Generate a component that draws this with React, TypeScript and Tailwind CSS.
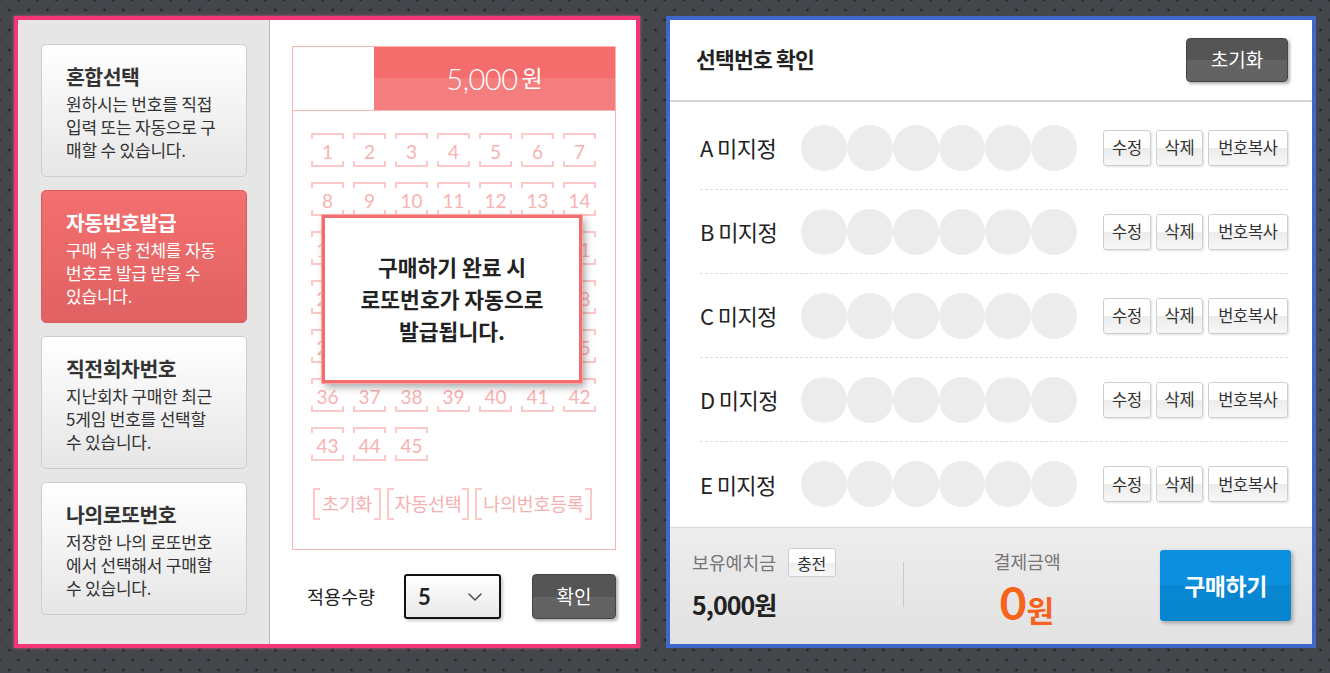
import { ChevronDown } from 'lucide-react';

const menus = [
  { title: '혼합선택', desc: ['원하시는 번호를 직접', '입력 또는 자동으로 구', '매할 수 있습니다.'], active: false },
  { title: '자동번호발급', desc: ['구매 수량 전체를 자동', '번호로 발급 받을 수', '있습니다.'], active: true },
  { title: '직전회차번호', desc: ['지난회차 구매한 최근', '5게임 번호를 선택할', '수 있습니다.'], active: false },
  { title: '나의로또번호', desc: ['저장한 나의 로또번호', '에서 선택해서 구매할', '수 있습니다.'], active: false },
];

const slots = ['A', 'B', 'C', 'D', 'E'];
const numbers = Array.from({ length: 45 }, (_, i) => i + 1);

function NumBox({ n }: { n: number }) {
  return (
    <div className="relative w-[33px] h-[34px] border-y-2 border-[#fcc9c9] flex items-center justify-center text-[19px] leading-none text-[#f8b2b2] font-['Lato',sans-serif]">
      <span className="absolute left-0 top-0 w-[2px] h-[4px] bg-[#fcc9c9]" />
      <span className="absolute right-0 top-0 w-[2px] h-[4px] bg-[#fcc9c9]" />
      <span className="absolute left-0 bottom-0 w-[2px] h-[4px] bg-[#fcc9c9]" />
      <span className="absolute right-0 bottom-0 w-[2px] h-[4px] bg-[#fcc9c9]" />
      <span className="pt-[2px]">{n}</span>
    </div>
  );
}

function Bracket({ label, width }: { label: string; width: string }) {
  return (
    <div className={`relative h-[32px] ${width} border-x-2 border-[#fcc9c9] flex items-center justify-center text-[18.5px] text-[#f7b0b0] tracking-[-0.3px]`}>
      <span className="absolute left-0 top-0 w-[5px] h-[2px] bg-[#fcc9c9]" />
      <span className="absolute right-0 top-0 w-[5px] h-[2px] bg-[#fcc9c9]" />
      <span className="absolute left-0 bottom-0 w-[5px] h-[2px] bg-[#fcc9c9]" />
      <span className="absolute right-0 bottom-0 w-[5px] h-[2px] bg-[#fcc9c9]" />
      {label}
    </div>
  );
}

function SmallBtn({ label, width }: { label: string; width: string }) {
  return (
    <button className={`h-[36px] ${width} rounded-[3px] border border-[#cfcfcf] bg-[linear-gradient(#ffffff_0%,#ffffff_50%,#ececec_51%,#f7f7f7_100%)] shadow-[1px_1px_2px_rgba(0,0,0,0.12)] text-[16.5px] text-[#333] tracking-[-0.3px]`}>
      {label}
    </button>
  );
}

export default function App() {
  return (
    <div className="w-[1330px] h-[673px] overflow-hidden bg-[#43474b] bg-[radial-gradient(circle,#2b2e31_1.3px,transparent_1.8px),radial-gradient(circle,#2b2e31_1.3px,transparent_1.8px)] bg-[length:19px_20px] bg-[position:0_0,9px_10px] font-['Noto_Sans_CJK_KR',sans-serif] flex items-start gap-[26px] pl-[14px] pt-[16px]">
      {/* Left: 번호 선택 */}
      <div className="w-[626px] h-[632px] border-4 border-[#f7367a] bg-white flex shadow-[0_0_3px_rgba(255,120,160,0.6)]">
        <div className="w-[252px] h-full bg-[#e6e6e6] border-r border-[#b9b9b9] pl-[23px] pt-[24px] flex flex-col gap-[13px]">
          {menus.map((m) => (
            <div
              key={m.title}
              className={`w-[206px] h-[133px] rounded-[5px] border pl-[24px] pt-[16px] ${
                m.active
                  ? 'border-[#d95b5b] bg-[linear-gradient(#f46f6f,#e06262)] text-white'
                  : 'border-[#cdcdcd] bg-[linear-gradient(#ffffff,#e6e6e6)] text-[#333]'
              }`}
            >
              <div className="text-[20.5px] font-bold leading-[30px] tracking-[-0.5px]">{m.title}</div>
              <div className="text-[17px] leading-[23px] mt-[1px] tracking-[-0.2px]">
                {m.desc.map((d) => (
                  <div key={d}>{d}</div>
                ))}
              </div>
            </div>
          ))}
        </div>

        <div className="flex-1 pl-[22px] pt-[26px]">
          <div className="relative w-[324px] h-[504px] border border-[#f7b6b6] flex flex-col">
            <div className="flex h-[64px] border-b border-[#f7b6b6]">
              <div className="w-[81px]" />
              <div className="flex-1 bg-[linear-gradient(#f46c6c_0%,#f46c6c_50%,#f47e7e_50%,#f47d7d_100%)] flex items-center justify-center text-white">
                <span className="font-['Lato',sans-serif] text-[29px] font-light tracking-[-0.5px]">5,000</span>
                <span className="text-[23px] ml-[4px] mb-[2px]">원</span>
              </div>
            </div>

            <div className="pl-[18px] pt-[22px] grid grid-cols-[repeat(7,33px)] gap-x-[9px] gap-y-[15px]">
              {numbers.map((n) => (
                <NumBox key={n} n={n} />
              ))}
            </div>

            <div className="flex gap-[6px] pl-[20px] mt-[27px]">
              <Bracket label="초기화" width="w-[68px]" />
              <Bracket label="자동선택" width="w-[82px]" />
              <Bracket label="나의번호등록" width="w-[117px]" />
            </div>

            {/* 자동발급 안내 */}
            <div className="absolute left-[29px] top-[168px] w-[260px] h-[168px] bg-white border-[3px] border-[#f26e6e] ring-1 ring-[#f9a9a9] shadow-[3px_4px_8px_rgba(0,0,0,0.35)] flex items-center justify-center text-center text-[21.5px] font-bold leading-[32px] text-[#222]">
              <div>
                구매하기 완료 시<br />
                로또번호가 자동으로<br />
                발급됩니다.
              </div>
            </div>
          </div>

          <div className="flex items-center mt-[24px]">
            <div className="w-[112px] pl-[15px] text-[18.5px] text-[#222]">적용수량</div>
            <div className="w-[97px] h-[45px] rounded-[3px] border-2 border-[#111] bg-[linear-gradient(#ffffff,#e8e8e8)] shadow-[2px_2px_3px_rgba(0,0,0,0.2)] flex items-center justify-between pl-[12px] pr-[12px]">
              <span className="text-[22px] font-bold text-[#222] font-['Lato',sans-serif]">5</span>
              <ChevronDown className="w-[24px] h-[24px] text-[#555]" strokeWidth={1.6} />
            </div>
            <button className="ml-[31px] w-[84px] h-[45px] rounded-[4px] bg-[linear-gradient(#555555_0%,#555555_50%,#636363_50%,#626262_100%)] border border-[#444] shadow-[2px_2px_3px_rgba(0,0,0,0.3)] text-white text-[19px]">
              확인
            </button>
          </div>
        </div>
      </div>

      {/* Right: 선택번호 확인 */}
      <div className="w-[650px] h-[632px] border-4 border-[#3f66c9] bg-white flex flex-col">
        <div className="h-[82px] border-b-2 border-[#d4d4d4] flex items-center justify-between pl-[26px] pr-[24px] pb-[1px]">
          <div className="text-[21.5px] font-bold text-[#222] tracking-[-0.8px]">선택번호 확인</div>
          <button className="w-[102px] h-[44px] rounded-[4px] bg-[linear-gradient(#555555_0%,#555555_50%,#636363_50%,#626262_100%)] border border-[#444] shadow-[2px_2px_3px_rgba(0,0,0,0.3)] text-white text-[19px]">
            초기화
          </button>
        </div>

        <div className="flex-1 pl-[30px] pr-[24px] pt-[4px]">
          {slots.map((s, i) => (
            <div
              key={s}
              className={`h-[84px] flex items-center ${i < slots.length - 1 ? 'border-b border-dashed border-[#dcdcdc]' : ''}`}
            >
              <div className="w-[101px] text-[22px] text-[#222] tracking-[-0.6px]">{s} 미지정</div>
              <div className="flex">
                {[0, 1, 2, 3, 4, 5].map((k) => (
                  <div key={k} className="w-[46px] h-[46px] rounded-full bg-[#ececec]" />
                ))}
              </div>
              <div className="ml-auto flex gap-[5px]">
                <SmallBtn label="수정" width="w-[48px]" />
                <SmallBtn label="삭제" width="w-[47px]" />
                <SmallBtn label="번호복사" width="w-[80px]" />
              </div>
            </div>
          ))}
        </div>

        <div className="h-[117px] border-t border-[#d8d8d8] bg-[linear-gradient(#ededed,#e2e2e2)] flex items-start pl-[22px] pr-[21px]">
          <div className="w-[211px] pt-[20px]">
            <div className="flex items-center gap-[12px]">
              <span className="text-[18.5px] text-[#777] tracking-[-0.3px]">보유예치금</span>
              <button className="w-[48px] h-[29px] rounded-[3px] border border-[#cfcfcf] bg-[linear-gradient(#ffffff_0%,#ffffff_50%,#eeeeee_51%,#f7f7f7_100%)] text-[16px] text-[#333]">
                충전
              </button>
            </div>
            <div className="mt-[9px] text-[25px] font-bold text-[#222] tracking-[-1px]">5,000원</div>
          </div>
          <div className="w-px h-[45px] bg-[#c9c9c9] mt-[34px]" />
          <div className="w-[246px] pt-[20px] flex flex-col items-center">
            <div className="text-[18.5px] text-[#777] tracking-[-0.3px]">결제금액</div>
            <div className="flex items-end text-[#f5631c] font-bold leading-none mt-[4px]">
              <span className="text-[46px] font-['Lato',sans-serif]">0</span>
              <span className="text-[30px] mb-[2px]">원</span>
            </div>
          </div>
          <button className="ml-[10px] mt-[22px] w-[131px] h-[71px] rounded-[3px] bg-[linear-gradient(#0c8fde_0%,#0c8fde_50%,#0886d1_50%,#0786cf_100%)] shadow-[2px_2px_4px_rgba(0,0,0,0.3)] text-white text-[23px] font-bold tracking-[-0.5px]">
            구매하기
          </button>
        </div>
      </div>
    </div>
  );
}
